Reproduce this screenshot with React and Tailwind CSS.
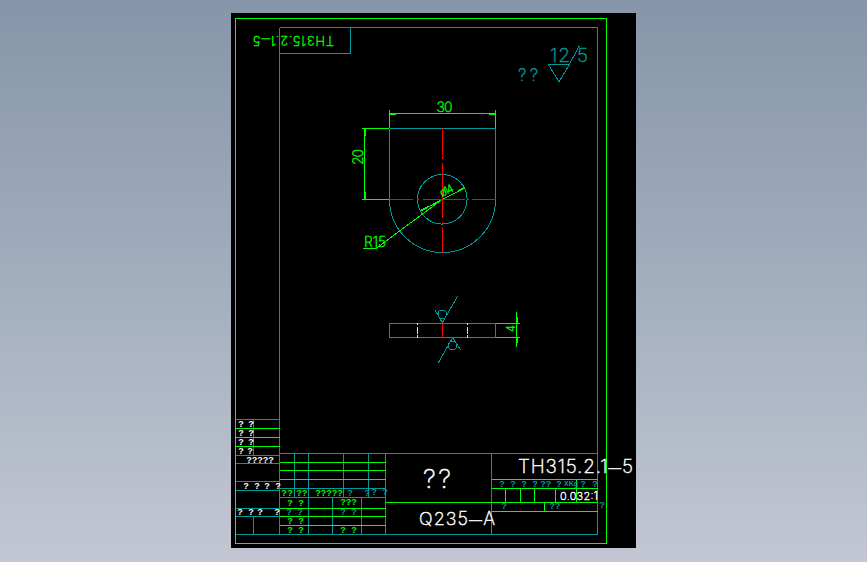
const TEAL = `
M279.5 27.5H597.5V534.5H236
M279.5 27.5V534.5
M350.5 27.5V53.5H279.5
M236 419.5H279.5 M236 455.5H279.5 M236 463.5H279.5 M236 481.5H279.5 M236 490.5H279.5 M236 508.5H279.5 M236 516.5H279.5
M253.5 419.5V455.5 M253.5 516.5V534.5
M279.5 453.5H597.5
M294.5 453.5V497.5 M308.5 453.5V534.5 M343.5 453.5V497.5 M368.5 453.5V497.5
M279.5 488.5H385.5 M279.5 497.5H385.5
M332.5 497.5V534.5 M361.5 497.5V534.5
M385.5 453.5V534.5 M491.5 453.5V534.5
M389.5 128.5H495.5 M389.5 128.5V199.5 M495.5 128.5V199.5
M389.5 323.5H495.5V337.5H389.5Z
M570.7 61.7L579.3 46 M548.3 64.5H569.5L559 81.7L548.3 64.5 M569.5 64.5L570.7 61.7
M457.7 296L442.3 322.7L435 310 M452.7 337.5L438.3 362.7 M452.7 337.5L460.7 350
`;
const GREEN = `
M235.5 18.5H606.5V543.5H235.5Z
M236 428.5H279.5 M236 437.5H279.5 M236 446.5H279.5
M279.5 462.5H385.5 M279.5 470.5H385.5 M279.5 479.5H385.5
M279.5 508.5H385.5 M279.5 516.5H385.5 M279.5 525.5H385.5
M385.5 502.5H597.5
M491.5 479.5H597.5 M491.5 488.5H597.5 M491.5 511.5H597.5
M505.5 488.5V502.5 M520.5 488.5V502.5 M534.5 488.5V502.5 M555.5 488.5V502.5 M576.5 479.5V502.5 M544.5 502.5V511.5
M389.5 110V128 M495.5 110V128 M389.5 113.5H495.5
M362 128.5H389 M362 199.5H389 M364.5 128.5V199.5
M465 187.7L420.7 210.7 M442.3 199.3L376 248.5H363
M495.5 323.5H520 M495.5 337.5H520 M516.5 312V346.7
`;
const ARROWS = `
M389.5 113.5H396 M495.5 113.5H489
M364.5 129V136 M364.5 199V192
M420.7 210.7L428 207 M465 187.7L458 191 M516.5 317V323 M516.5 337V343
`;
const RED = `
M442.5 128V155 M442.5 156V159 M442.5 163V218 M442.5 222V224 M442.5 227V253
M389 199.5H413 M417 199.5H419 M422.5 199.5H465 M467 199.5H469 M472 199.5H495.5
M442.5 323.5V337.5
`;
const YELLOW = `M417.5 323V325 M417.5 327V334 M417.5 335V337.5 M467.5 323V325 M467.5 327V334 M467.5 335V337.5`;

const whiteQ = [
  [241,424],[251,424],[241,433],[251,433],[241,442],[251,442],[241,450.5],[250,450.5],
  [249,460],[254.5,460],[260,460],[265.5,460],[271,460],
  [246,486],[257,486],[267,486],[278,486],
  [240,512],[251,512],[260,512],[277,512],
];
const greenQ = [
  [284,492.5],[290,492.5],[299,492.5],[304.5,492.5],[318,492.5],[323.5,492.5],[329,492.5],[334.5,492.5],[340,492.5],
  [290,503],[301,503],[343,502],[348.5,502],[354,502],
  [290,521],[301,521],[290,530],[301,530],[343,530],[354,530],
];
const tealQ = [
  [350,493],[367,493],[374,492],[385,492],[289,512],[300,512],[343,512],[354,512],
  [502,483.5],[513,483.5],[524,483.5],[535,483.5],[543,483.5],[548.5,483.5],[559,483.5],[583,483.5],[595,483.5],
  [504,506],[552,506],[557.5,506],[602,505],
];

export default function App() {
  return (
    <div className="w-[867px] h-[562px] overflow-hidden pt-[13px] pl-[231px] bg-gradient-to-b from-[#8695a9] via-[#a2aebe] to-[#c3c7d3]">
      <svg
        viewBox="231 13 405 535"
        className="block w-[405px] h-[535px] bg-black fill-none [shape-rendering:crispEdges] font-['Liberation_Sans',sans-serif]"
      >
        <path d={TEAL} className="stroke-[#009a9a]" />
        <circle cx="442.3" cy="199.3" r="24.8" className="stroke-[#009a9a]" />
        <path d="M389.5 199.5A53 53 0 0 0 495.5 199.5" className="stroke-[#009a9a]" />
        <circle cx="442.3" cy="314.3" r="4.3" className="stroke-[#009a9a]" />
        <circle cx="452.7" cy="345.5" r="4.3" className="stroke-[#009a9a]" />
        <path d={GREEN} className="stroke-[#00ff00]" />
        <path d={ARROWS} className="stroke-[#00ff00] stroke-2" />
        <path d={RED} className="stroke-[#ff0000]" />
        <path d={YELLOW} className="stroke-[#ffff00]" />

        <g className="fill-[#00ff00] stroke-[#00ff00] stroke-[0.4] font-['Inter',sans-serif] font-extralight">
          <text x="0" y="0" transform="translate(334 36) rotate(180)" textLength="81" className="text-[13px]">TH315.2.1<tspan className="text-[9px]">—</tspan>5</text>
          <text x="436.5" y="112" textLength="16" className="text-[14px]">30</text>
          <text x="0" y="0" transform="translate(363 165) rotate(-90)" textLength="16" className="text-[14px]">20</text>
          <text x="364" y="247" textLength="22" className="text-[14px]">R15</text>
          <text x="0" y="0" transform="translate(515 332) rotate(-90)" className="text-[11px]">4</text>
          <text x="0" y="0" transform="translate(442 197) rotate(-27)" textLength="14" className="text-[11px]">ø14</text>
        </g>
        <g className="fill-[#009a9a] stroke-[#009a9a] stroke-[0.4] font-['Inter',sans-serif] font-extralight">
          <text x="550" y="62" textLength="20" className="text-[19px]">12</text>
          <text x="577" y="62" className="text-[19px]">5</text>
          <text x="518" y="81" textLength="20" className="text-[17px]">??</text>
        </g>
        <g className="fill-white stroke-white stroke-[0.4] font-['Inter',sans-serif] font-extralight">
          <text x="423" y="488" textLength="28" className="text-[26px]">??</text>
          <text x="419" y="525" textLength="76" className="text-[18px]">Q235<tspan className="text-[13px]">—</tspan>A</text>
          <text x="518" y="473" textLength="115" className="text-[19px]">TH315.2.1<tspan className="text-[13px]">—</tspan>5</text>
          <text x="560" y="500" textLength="38" className="text-[11px]">0.032:1</text>
        </g>

        <g className="fill-white font-bold text-[9px]" textAnchor="middle" dominantBaseline="central">
          {whiteQ.map(([x, y], i) => <text key={i} x={x} y={y}>?</text>)}
        </g>
        <g className="fill-[#00ff00] font-bold text-[9px]" textAnchor="middle" dominantBaseline="central">
          {greenQ.map(([x, y], i) => <text key={i} x={x} y={y}>?</text>)}
        </g>
        <g className="fill-[#009a9a] font-bold text-[9px]" textAnchor="middle" dominantBaseline="central">
          {tealQ.map(([x, y], i) => <text key={i} x={x} y={y}>?</text>)}
          <text x="571" y="483.5" className="text-[7px]">XKg</text>
        </g>
      </svg>
    </div>
  );
}
